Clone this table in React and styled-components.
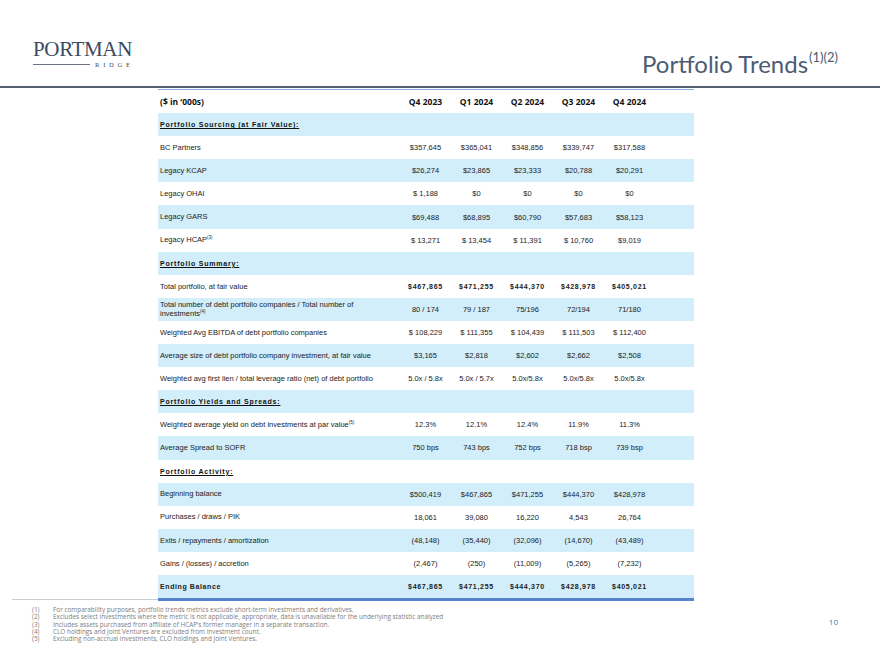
import React from "react";
import styled, { createGlobalStyle } from "styled-components";

const Global = createGlobalStyle`
  html, body { margin: 0; padding: 0; background: #ffffff; }
  body { font-family: "Liberation Sans", Arial, sans-serif; }
`;

const Page = styled.div`
  width: 880px;
  height: 660px;
  background: #fff;
  display: flex;
  flex-direction: column;
  overflow: hidden;
`;

const Header = styled.header`
  height: 86px;
  display: flex;
  justify-content: space-between;
  align-items: flex-start;
  padding: 0 42px 0 33px;
`;

const Logo = styled.div`
  margin-top: 39px;
  display: flex;
  flex-direction: column;
  color: #3b4a60;
  font-family: "Liberation Serif", "Times New Roman", serif;
`;

const LogoWord = styled.div`
  font-size: 21px;
  line-height: 21px;
  letter-spacing: -0.35px;
`;

const LogoSub = styled.div`
  margin-top: 1px;
  display: flex;
  align-items: center;
  gap: 5px;
  height: 7px;
`;

const LogoLine = styled.div`
  width: 57px;
  height: 1px;
  background: #6b7587;
`;

const LogoSmall = styled.span`
  font-size: 6.5px;
  line-height: 7px;
  letter-spacing: 3.8px;
`;

const Title = styled.h1`
  margin: 45px 0 0;
  font-family: Lato, "Open Sans", sans-serif;
  font-weight: 400;
  font-size: 24px;
  line-height: 24px;
  color: #4c5c74;
  white-space: nowrap;
`;

const TitleSup = styled.span`
  font-size: 13px;
  vertical-align: 11px;
  margin-left: 1px;
`;

const HeaderRule = styled.div`
  height: 2px;
  background: #56606f;
`;

const Table = styled.div`
  margin: 1px 0 0 158px;
  width: 536px;
  border-top: 1px solid #86aee8;
  border-bottom: 3px solid #5583d0;
`;

const Row = styled.div`
  display: grid;
  grid-template-columns: 242px repeat(5, 51px) 1fr;
  align-items: center;
  height: 23.1px;
  background: ${(p) => (p.$shade ? "#d1eefa" : "#ffffff")};
  color: #222;
`;

const HeadCell = styled.div`
  font-family: "Open Sans", "Liberation Sans", sans-serif;
  font-weight: 700;
  font-size: 8.5px;
  color: #111;
  text-align: ${(p) => (p.$left ? "left" : "center")};
  padding-left: ${(p) => (p.$left ? "2px" : "0")};
  white-space: nowrap;
`;

const Label = styled.div`
  padding-left: 2px;
  line-height: 9.5px;
  white-space: nowrap;
  font-weight: ${(p) => (p.$bold ? 700 : 400)};
  letter-spacing: ${(p) => (p.$bold ? "0.6px" : "0")};
  font-size: ${(p) => (p.$bold ? "7px" : "7.5px")};
`;

const Section = styled.div`
  grid-column: 1 / -1;
  padding-left: 2px;
  font-weight: 700;
  font-size: 7px;
  letter-spacing: 0.8px;
  text-decoration: underline;
  text-underline-offset: 1px;
  color: #111;
`;

const Value = styled.div`
  text-align: center;
  white-space: nowrap;
  font-size: ${(p) => (p.$bold ? "7px" : "7.5px")};
  font-weight: ${(p) => (p.$bold ? 700 : 400)};
  letter-spacing: ${(p) => (p.$bold ? "0.7px" : "0")};
`;

const Sup = styled.sup`
  font-size: 4.5px;
  vertical-align: 3px;
  line-height: 0;
`;

const Footer = styled.footer`
  display: flex;
  justify-content: space-between;
  align-items: flex-start;
  padding-right: 42px;
`;

const FootLeft = styled.div`
  display: flex;
  flex-direction: column;
`;

const FootRule = styled.div`
  margin: -2px 0 0 12px;
  width: 146px;
  height: 1px;
  background: #c9ced6;
`;

const Notes = styled.ol`
  list-style: none;
  margin: 6px 0 0;
  padding: 0 0 0 32px;
  font-family: "Open Sans", "Liberation Sans", sans-serif;
  font-size: 6.4px;
  line-height: 7.3px;
  color: #7d7d7d;
`;

const Note = styled.li`
  display: grid;
  grid-template-columns: 21px 1fr;
  white-space: nowrap;
`;

const PageNum = styled.div`
  margin-top: 16px;
  font-family: "Open Sans", "Liberation Sans", sans-serif;
  font-size: 8px;
  line-height: 10px;
  color: #4a78b5;
`;

const quarters = ["Q4 2023", "Q1 2024", "Q2 2024", "Q3 2024", "Q4 2024"];

const rows = [
  { section: "Portfolio Sourcing (at Fair Value):" },
  { label: "BC Partners", v: ["$357,645", "$365,041", "$348,856", "$339,747", "$317,588"] },
  { label: "Legacy KCAP", v: ["$26,274", "$23,865", "$23,333", "$20,788", "$20,291"] },
  { label: "Legacy OHAI", v: ["$ 1,188", "$0", "$0", "$0", "$0"] },
  { label: "Legacy GARS", v: ["$69,488", "$68,895", "$60,790", "$57,683", "$58,123"] },
  { label: "Legacy HCAP", sup: "(3)", v: ["$ 13,271", "$ 13,454", "$ 11,391", "$ 10,760", "$9,019"] },
  { section: "Portfolio Summary:" },
  { label: "Total portfolio, at fair value", boldV: true, v: ["$467,865", "$471,255", "$444,370", "$428,978", "$405,021"] },
  {
    label: "Total number of debt portfolio companies / Total number of",
    label2: "investments",
    sup: "(4)",
    v: ["80 / 174", "79 / 187", "75/196", "72/194", "71/180"],
  },
  { label: "Weighted Avg EBITDA of debt portfolio companies", v: ["$ 108,229", "$ 111,355", "$ 104,439", "$ 111,503", "$ 112,400"] },
  { label: "Average size of debt portfolio company investment, at fair value", v: ["$3,165", "$2,818", "$2,602", "$2,662", "$2,508"] },
  { label: "Weighted avg first lien / total  leverage ratio (net) of debt portfolio", v: ["5.0x / 5.8x", "5.0x / 5.7x", "5.0x/5.8x", "5.0x/5.8x", "5.0x/5.8x"] },
  { section: "Portfolio Yields and Spreads:" },
  { label: "Weighted average yield on debt investments at par value", sup: "(5)", v: ["12.3%", "12.1%", "12.4%", "11.9%", "11.3%"] },
  { label: "Average Spread to SOFR", v: ["750 bps", "743 bps", "752 bps", "718 bsp", "739 bsp"] },
  { section: "Portfolio Activity:" },
  { label: "Beginning balance", v: ["$500,419", "$467,865", "$471,255", "$444,370", "$428,978"] },
  { label: "Purchases / draws / PIK", v: ["18,061", "39,080", "16,220", "4,543", "26,764"] },
  { label: "Exits / repayments / amortization", v: ["(48,148)", "(35,440)", "(32,096)", "(14,670)", "(43,489)"] },
  { label: "Gains / (losses) / accretion", v: ["(2,467)", "(250)", "(11,009)", "(5,265)", "(7,232)"] },
  { label: "Ending Balance", boldL: true, boldV: true, v: ["$467,865", "$471,255", "$444,370", "$428,978", "$405,021"] },
];

const notes = [
  "For comparability purposes, portfolio trends metrics exclude short-term investments and derivatives.",
  "Excludes select investments where the metric is not applicable, appropriate, data is unavailable for the underlying statistic analyzed",
  "Includes assets purchased from affiliate of HCAP’s former manager in a separate transaction.",
  "CLO holdings and Joint Ventures are excluded from investment count.",
  "Excluding non-accrual investments, CLO holdings and Joint Ventures.",
];

export default function App() {
  return (
    <Page>
      <Global />
      <Header>
        <Logo>
          <LogoWord>PORTMAN</LogoWord>
          <LogoSub>
            <LogoLine />
            <LogoSmall>RIDGE</LogoSmall>
          </LogoSub>
        </Logo>
        <Title>
          Portfolio Trends<TitleSup>(1)(2)</TitleSup>
        </Title>
      </Header>
      <HeaderRule />
      <Table>
        <Row>
          <HeadCell $left>($ in ‘000s)</HeadCell>
          {quarters.map((q) => (
            <HeadCell key={q}>{q}</HeadCell>
          ))}
        </Row>
        {rows.map((r, i) => {
          const shade = i % 2 === 0;
          if (r.section) {
            return (
              <Row key={i} $shade={shade}>
                <Section>{r.section}</Section>
              </Row>
            );
          }
          return (
            <Row key={i} $shade={shade}>
              <Label $bold={r.boldL}>
                {r.label}
                {r.label2 ? (
                  <>
                    <br />
                    {r.label2}
                  </>
                ) : null}
                {r.sup ? <Sup>{r.sup}</Sup> : null}
              </Label>
              {r.v.map((v, j) => (
                <Value key={j} $bold={r.boldV}>
                  {v}
                </Value>
              ))}
            </Row>
          );
        })}
      </Table>
      <Footer>
        <FootLeft>
          <FootRule />
          <Notes>
            {notes.map((n, i) => (
              <Note key={i}>
                <span>({i + 1})</span>
                <span>{n}</span>
              </Note>
            ))}
          </Notes>
        </FootLeft>
        <PageNum>10</PageNum>
      </Footer>
    </Page>
  );
}
